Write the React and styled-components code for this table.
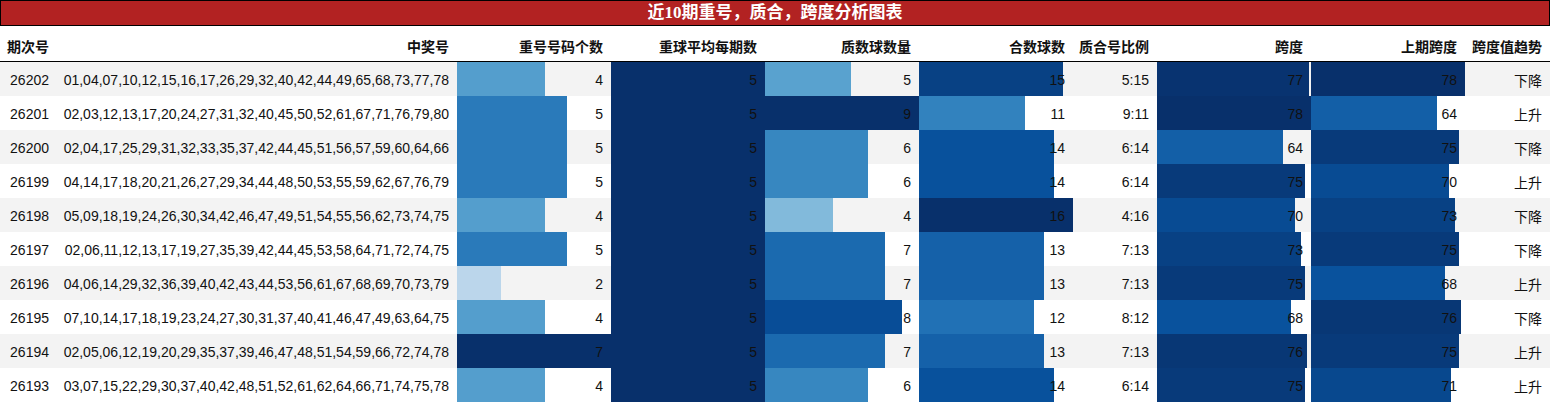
import React from "react";
import styled, { createGlobalStyle } from "styled-components";

const GlobalStyle = createGlobalStyle`
   * { box-sizing: border-box; }
   body {
      margin: 0;
      background: #fff;
      font-family: "Liberation Sans", "Noto Sans CJK SC", sans-serif;
   }
`

const COLS = '57px 400px 154px 154px 154px 154px 84px 154px 154px 85px'

const BLUES = ['#f7fbff', '#deebf7', '#c6dbef', '#9ecae1', '#6baed6', '#4292c6', '#2171b5', '#08519c', '#08306b']

const hexToRgb = (h) => [1, 3, 5].map(i => parseInt(h.slice(i, i + 2), 16))

const blues = (t) => {
   const x = Math.max(0, Math.min(1, t)) * 8
   const i = Math.min(7, Math.floor(x))
   const f = x - i
   const a = hexToRgb(BLUES[i])
   const b = hexToRgb(BLUES[i + 1])
   const c = a.map((v, k) => Math.round(v + (b[k] - v) * f))
   return `rgb(${c.join(',')})`
}

const Wrapper = styled.div`
   width: 1550px;
`
const Title = styled.div`
   height: 26px;
   border: 1px solid #000;
   background: #b22222;
   color: #fff;
   text-align: center;
   font: bold 17px/24px "Liberation Serif", "Noto Sans CJK SC", serif;
`
const HeadRow = styled.div`
   display: grid;
   grid-template-columns: ${COLS};
   height: 36px;
   border-bottom: 1px solid #000;
`
const HeadCell = styled.div`
   display: flex;
   align-items: center;
   justify-content: flex-end;
   padding: 5px 8px 0;
   font: bold 14px "Noto Sans CJK SC", sans-serif;
   color: #111;
   white-space: nowrap;
`
const Row = styled.div`
   display: grid;
   grid-template-columns: ${COLS};
   height: 34px;
   background: ${props => props.$odd ? '#f3f3f3' : '#fff'};
`
const Cell = styled.div`
   display: flex;
   align-items: center;
   justify-content: flex-end;
   padding: 2px 8px 0;
   font-size: 14px;
   color: #111;
   white-space: nowrap;
   background: ${props => props.$pct != null
      ? `linear-gradient(90deg, ${props.$color} ${props.$pct}%, transparent ${props.$pct}%)`
      : 'none'};
`

const headers = ['期次号', '中奖号', '重号号码个数', '重球平均每期数', '质数球数量', '合数球数', '质合号比例', '跨度', '上期跨度', '跨度值趋势']

const rows = [
   ['26202', '01,04,07,10,12,15,16,17,26,29,32,40,42,44,49,65,68,73,77,78', 4, 5, 5, 15, '5:15', 77, 78, '下降'],
   ['26201', '02,03,12,13,17,20,24,27,31,32,40,45,50,52,61,67,71,76,79,80', 5, 5, 9, 11, '9:11', 78, 64, '上升'],
   ['26200', '02,04,17,25,29,31,32,33,35,37,42,44,45,51,56,57,59,60,64,66', 5, 5, 6, 14, '6:14', 64, 75, '下降'],
   ['26199', '04,14,17,18,20,21,26,27,29,34,44,48,50,53,55,59,62,67,76,79', 5, 5, 6, 14, '6:14', 75, 70, '上升'],
   ['26198', '05,09,18,19,24,26,30,34,42,46,47,49,51,54,55,56,62,73,74,75', 4, 5, 4, 16, '4:16', 70, 73, '下降'],
   ['26197', '02,06,11,12,13,17,19,27,35,39,42,44,45,53,58,64,71,72,74,75', 5, 5, 7, 13, '7:13', 73, 75, '下降'],
   ['26196', '04,06,14,29,32,36,39,40,42,43,44,53,56,61,67,68,69,70,73,79', 2, 5, 7, 13, '7:13', 75, 68, '上升'],
   ['26195', '07,10,14,17,18,19,23,24,27,30,31,37,40,41,46,47,49,63,64,75', 4, 5, 8, 12, '8:12', 68, 76, '下降'],
   ['26194', '02,05,06,12,19,20,29,35,37,39,46,47,48,51,54,59,66,72,74,78', 7, 5, 7, 13, '7:13', 76, 75, '上升'],
   ['26193', '03,07,15,22,29,30,37,40,42,48,51,52,61,62,64,66,71,74,75,78', 4, 5, 6, 14, '6:14', 75, 71, '上升'],
]

// columns drawn as bars
const barCols = [2, 3, 4, 5, 7, 8]
const maxOf = {}
barCols.forEach(c => { maxOf[c] = Math.max(...rows.map(r => r[c])) })

const App = () => {
   return (
      <Wrapper>
         <GlobalStyle />
         <Title>近10期重号，质合，跨度分析图表</Title>
         <HeadRow>
            {headers.map(h => <HeadCell key={h}>{h}</HeadCell>)}
         </HeadRow>
         {rows.map((r, i) => (
            <Row key={r[0]} $odd={i % 2 === 0}>
               {r.map((v, c) => {
                  if (barCols.includes(c)) {
                     const t = v / maxOf[c]
                     return <Cell key={c} $pct={(t * 100).toFixed(2)} $color={blues(t)}>{v}</Cell>
                  }
                  return <Cell key={c}>{v}</Cell>
               })}
            </Row>
         ))}
      </Wrapper>
   )
}
export default App
